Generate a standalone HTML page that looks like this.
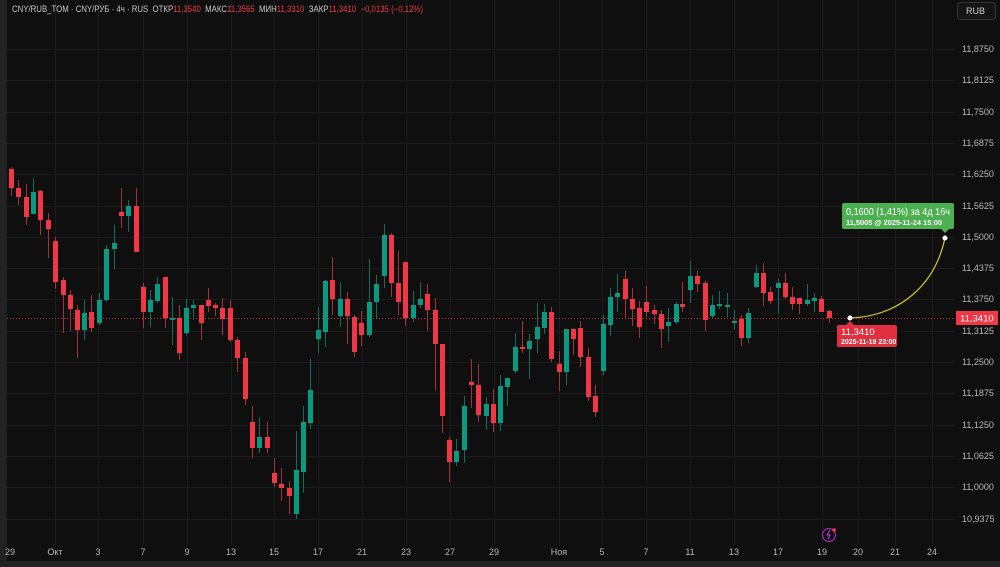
<!DOCTYPE html>
<html><head><meta charset="utf-8"><style>
html,body{margin:0;padding:0;background:#0f0f0f;width:1000px;height:567px;overflow:hidden;font-family:"Liberation Sans",sans-serif}
svg{display:block}
</style></head><body>
<svg width="1000" height="567" viewBox="0 0 1000 567" xmlns="http://www.w3.org/2000/svg" font-family="Liberation Sans, sans-serif">
<rect width="1000" height="567" fill="#0f0f0f"/>
<rect x="0" y="0" width="7" height="567" fill="#222"/>
<rect x="0" y="561" width="1000" height="6" fill="#222"/>
<g stroke="#1c1c1c" stroke-width="1">
<line x1="7" x2="955" y1="49.5" y2="49.5"/><line x1="7" x2="955" y1="80.5" y2="80.5"/><line x1="7" x2="955" y1="112.5" y2="112.5"/><line x1="7" x2="955" y1="143.5" y2="143.5"/><line x1="7" x2="955" y1="174.5" y2="174.5"/><line x1="7" x2="955" y1="206.5" y2="206.5"/><line x1="7" x2="955" y1="237.5" y2="237.5"/><line x1="7" x2="955" y1="268.5" y2="268.5"/><line x1="7" x2="955" y1="299.5" y2="299.5"/><line x1="7" x2="955" y1="331.5" y2="331.5"/><line x1="7" x2="955" y1="362.5" y2="362.5"/><line x1="7" x2="955" y1="393.5" y2="393.5"/><line x1="7" x2="955" y1="425.5" y2="425.5"/><line x1="7" x2="955" y1="456.5" y2="456.5"/><line x1="7" x2="955" y1="487.5" y2="487.5"/><line x1="7" x2="955" y1="519.5" y2="519.5"/>
<line x1="55.5" x2="55.5" y1="0" y2="545"/><line x1="98.5" x2="98.5" y1="0" y2="545"/><line x1="143.5" x2="143.5" y1="0" y2="545"/><line x1="187.5" x2="187.5" y1="0" y2="545"/><line x1="231.5" x2="231.5" y1="0" y2="545"/><line x1="274.5" x2="274.5" y1="0" y2="545"/><line x1="318.5" x2="318.5" y1="0" y2="545"/><line x1="362.5" x2="362.5" y1="0" y2="545"/><line x1="406.5" x2="406.5" y1="0" y2="545"/><line x1="450.5" x2="450.5" y1="0" y2="545"/><line x1="494.5" x2="494.5" y1="0" y2="545"/><line x1="559.5" x2="559.5" y1="0" y2="545"/><line x1="602.5" x2="602.5" y1="0" y2="545"/><line x1="646.5" x2="646.5" y1="0" y2="545"/><line x1="690.5" x2="690.5" y1="0" y2="545"/><line x1="734.5" x2="734.5" y1="0" y2="545"/><line x1="778.5" x2="778.5" y1="0" y2="545"/><line x1="822.5" x2="822.5" y1="0" y2="545"/><line x1="858.5" x2="858.5" y1="0" y2="545"/><line x1="895.5" x2="895.5" y1="0" y2="545"/><line x1="932.5" x2="932.5" y1="0" y2="545"/>
</g>
<line x1="7" x2="955" y1="318.5" y2="318.5" stroke="#f23645" stroke-width="1" stroke-dasharray="1,2" opacity="0.8"/>
<g id="c"></g>
<path d="M850 318 C900 316 935 285 945 238" fill="none" stroke="#d9c521" stroke-width="1.2"/>
<circle cx="850" cy="318" r="2.5" fill="#fff"/>
<circle cx="945" cy="238" r="2.5" fill="#fff"/>
<rect x="842" y="203" width="112" height="26" rx="2" fill="#4caf50"/>
<path d="M941 229 l4 4 l4 -4z" fill="#4caf50"/>
<text x="846" y="215" font-size="10" fill="#fff" textLength="104" lengthAdjust="spacingAndGlyphs">0,1600 (1,41%) за 4д 16ч</text>
<text x="846" y="225" font-size="7" fill="#fff" font-weight="bold" textLength="96" lengthAdjust="spacingAndGlyphs">11,5005 @ 2025-11-24  15:00</text>
<rect x="837" y="325" width="60" height="22" rx="2" fill="#e03040"/>
<path d="M846 325 l4 -4 l4 4z" fill="#e03040"/>
<text x="841" y="335" font-size="9.5" fill="#fff">11,3410</text>
<text x="841" y="344" font-size="7" fill="#fff" font-weight="bold">2025-11-19 23:00</text>
<rect x="956" y="311" width="42" height="14" fill="#f23645"/>
<text x="960" y="321.5" font-size="9.5" fill="#fff">11,3410</text>
<g font-size="9" fill="#b8b8b8">
<text x="962" y="52">11,8750</text><text x="962" y="83">11,8125</text><text x="962" y="115">11,7500</text><text x="962" y="146">11,6875</text><text x="962" y="177">11,6250</text><text x="962" y="209">11,5625</text><text x="962" y="240">11,5000</text><text x="962" y="271">11,4375</text><text x="962" y="302">11,3750</text><text x="962" y="334">11,3125</text><text x="962" y="365">11,2500</text><text x="962" y="396">11,1875</text><text x="962" y="428">11,1250</text><text x="962" y="459">11,0625</text><text x="962" y="490">11,0000</text><text x="962" y="522">10,9375</text>
</g>
<g font-size="9" fill="#b8b8b8" text-anchor="middle">
<text x="10" y="555">29</text><text x="55" y="555">Окт</text><text x="98" y="555">3</text><text x="143" y="555">7</text><text x="187" y="555">9</text><text x="231" y="555">13</text><text x="274" y="555">15</text><text x="318" y="555">17</text><text x="362" y="555">21</text><text x="406" y="555">23</text><text x="450" y="555">27</text><text x="494" y="555">29</text><text x="559" y="555">Ноя</text><text x="602" y="555">5</text><text x="646" y="555">7</text><text x="690" y="555">11</text><text x="734" y="555">13</text><text x="778" y="555">17</text><text x="822" y="555">19</text><text x="858" y="555">20</text><text x="895" y="555">21</text><text x="932" y="555">24</text>
</g>
<circle cx="829" cy="535" r="6.5" fill="none" stroke="#9c27b0" stroke-width="1.3"/>
<path d="M830 530 l-3 5 h3 l-2 4" fill="none" stroke="#c040e0" stroke-width="1"/>
<circle cx="834" cy="530" r="1.8" fill="#f23645"/>
<rect x="957.5" y="2.5" width="38" height="17" rx="3" fill="#151515" stroke="#333"/>
<text x="966" y="14" font-size="9" fill="#ccc">RUB</text>
<text x="12" y="12" font-size="9" fill="#c8c8c8" xml:space="preserve" textLength="411" lengthAdjust="spacingAndGlyphs">CNY/RUB_TOM · CNY/РУБ · 4ч · RUS  ОТКР<tspan fill="#f23645">11,3540</tspan>  МАКС<tspan fill="#f23645">11,3565</tspan>  МИН<tspan fill="#f23645">11,3310</tspan>  ЗАКР<tspan fill="#f23645">11,3410</tspan>  <tspan fill="#f23645">−0,0135 (−0,12%)</tspan></text>
</svg>
<script>
var d=[
[11,'r',169,188,167,196],[18,'r',188,197,180,205],[26,'r',197,217,184,225],[33,'g',192,214,178,214],[40,'r',191,220,190,235],[48,'r',220,229,213,258],[55,'r',241,282,237,289],[63,'r',280,295,277,333],[70,'r',295,309,290,331],[77,'r',310,330,305,358],[84,'g',313,330,300,340],[91,'r',312,328,295,332],[99,'g',300,323,293,325],[106,'g',249,300,245,302],[114,'g',243,249,225,269],[121,'r',212,216,188,228],[128,'g',206,216,200,232],[136,'r',206,252,188,252],
[143,'r',287,312,283,328],[150,'g',300,312,290,327],[157,'g',284,301,277,303],[165,'r',277,318,277,328],[172,'g',318,319,297,345],[179,'r',318,353,305,360],[186,'g',308,333,299,335],[193,'g',305,308,300,320],[201,'r',305,323,305,340],[208,'r',300,306,288,312],[215,'r',305,308,303,316],[222,'r',308,319,298,335],[230,'r',308,340,300,342],[237,'r',340,358,337,372],[245,'r',358,399,352,405],[252,'r',422,448,406,458],[259,'g',437,448,417,453],[267,'r',437,448,422,453],[274,'r',473,483,458,487],[281,'r',484,488,468,501],[289,'r',488,496,481,514],[296,'g',470,514,431,519],[303,'g',422,472,406,493],[310,'g',390,423,359,429],[318,'g',330,339,307,353],[325,'g',281,332,280,347],[332,'r',280,299,257,315],[340,'g',299,316,282,327],[347,'r',299,316,292,344],[354,'r',317,352,315,357],[361,'r',323,335,311,346],[369,'g',302,335,259,337],[376,'g',284,302,275,318],[384,'g',235,276,224,288],[391,'r',235,283,233,297],[398,'r',283,302,251,315],[405,'r',262,318,262,326],[413,'g',305,318,291,322],[420,'g',299,305,282,308],[427,'r',294,310,284,331],[435,'r',310,344,298,390],[442,'r',344,416,344,433],[449,'r',440,462,437,482],[456,'g',451,462,439,466],[464,'g',406,450,396,463],[471,'r',382,385,359,408],[478,'r',385,415,364,422],
[486,'g',404,416,397,430],[493,'r',404,423,389,432],[500,'g',386,423,375,431],[507,'g',378,387,378,406],[515,'g',347,371,333,373],[522,'r',347,349,321,353],[529,'g',341,349,334,379],[537,'g',327,339,303,353],[544,'g',312,328,304,334],[551,'r',312,359,307,362],[559,'r',364,372,351,391],[566,'g',329,372,329,385],[573,'r',329,339,328,355],[580,'r',328,357,321,367],[588,'r',357,397,348,401],[595,'r',396,412,385,417],[603,'g',324,371,315,375],[610,'g',297,325,288,336],[617,'g',293,297,274,312],[625,'r',279,299,271,318],[632,'r',299,309,288,326],[639,'r',308,327,301,338],[646,'r',302,312,286,317],[654,'r',310,314,305,324],[661,'r',314,329,310,348],[668,'g',322,326,308,342],[676,'g',304,322,302,324],[682,'r',304,307,282,312],[690,'g',276,290,261,303],[697,'r',276,284,271,292],[705,'r',283,320,281,331],[712,'g',305,316,295,318],[719,'g',304,306,291,309],[727,'g',305,306,293,317],[734,'g',321,323,310,330],[741,'r',319,338,315,346],[748,'g',313,338,308,343],[756,'g',273,287,265,288],[763,'r',273,293,263,306],[770,'r',292,301,287,304],[778,'g',283,288,279,314],[785,'r',283,297,273,299],[792,'r',297,304,287,310],[799,'r',298,304,298,314],[807,'g',300,304,284,306],[814,'g',298,301,293,312],[821,'r',299,312,296,312],[829,'r',311,318,310,323]];
var s='';d.forEach(function(c){var col=c[1]=='r'?'#f23645':'#089981';var wc=c[1]=='r'?'#a8303a':'#0b6e5e';var t=Math.min(c[2],c[3]),h=Math.max(2,Math.abs(c[3]-c[2]));s+='<rect x="'+(c[0])+'" y="'+c[4]+'" width="1" height="'+(c[5]-c[4])+'" fill="'+wc+'"/><rect x="'+(c[0]-2)+'" y="'+t+'" width="5" height="'+h+'" fill="'+col+'"/>';});
document.getElementById('c').innerHTML=s;
</script>
</body></html>
